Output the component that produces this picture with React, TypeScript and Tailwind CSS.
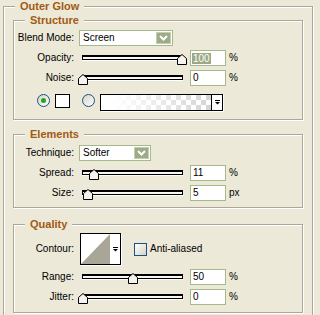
import type { ReactNode } from "react";

function Group({ title, className, children }: { title: string; className: string; children?: ReactNode }) {
  return (
    <div className={`relative border border-[#ACA899] shadow-[inset_1px_1px_0_#fff,1px_1px_0_#fff] ${className}`}>
      <span className="absolute -top-[7px] left-[11px] bg-[#ECE9D8] px-[5px] text-[11px] leading-[13px] font-bold text-[#A15A12]">
        {title}
      </span>
      {children}
    </div>
  );
}

function ChevronButton() {
  return (
    <div className="w-[15px] h-[12px] bg-[#9DAB87] border border-[#C4CEB3] flex items-center justify-center">
      <svg width="9" height="6" viewBox="0 0 9 6">
        <polyline points="1,1 4.5,4.5 8,1" fill="none" stroke="#fff" strokeWidth="2" />
      </svg>
    </div>
  );
}

function Dropdown({ value, width }: { value: string; width: string }) {
  return (
    <div className={`${width} h-[16px] bg-white border border-[#A5B98C] flex items-center justify-between pl-[3px] pr-[1px]`}>
      <span>{value}</span>
      <ChevronButton />
    </div>
  );
}

function Slider({ pos }: { pos: number }) {
  return (
    <div className="relative w-[109px] h-[16px] pt-[5px] px-[4px]">
      <div className="h-[5px] border border-black border-t-2 bg-[#F7F6F1] shadow-[0_1px_0_#fff]" />
      <svg
        className="absolute top-[4px]"
        style={{ left: Math.round(pos * 99) }}
        width="10"
        height="11"
        viewBox="0 0 10 11"
      >
        <polygon points="0.5,4.5 5,0.5 9.5,4.5 9.5,10.5 0.5,10.5" fill="#F4F3EE" stroke="#000" />
      </svg>
    </div>
  );
}

function NumberField({ value, unit, selected }: { value: string; unit: string; selected?: boolean }) {
  return (
    <div className="flex items-center ml-[3px]">
      <div className="w-[36px] h-[16px] bg-white border border-[#A5B98C] flex items-center pl-[1px]">
        <span className={selected ? "px-[1px] bg-[#9CA986] text-white leading-[11px]" : "px-[1px]"}>{value}</span>
      </div>
      <span className="ml-[3px]">{unit}</span>
    </div>
  );
}

function Label({ children }: { children: ReactNode }) {
  return <span className="w-[60px] text-right shrink-0">{children}</span>;
}

function SliderRow({ label, pos, value, unit, selected }: { label: string; pos: number; value: string; unit: string; selected?: boolean }) {
  return (
    <div className="flex items-center h-[16px]">
      <Label>{label}</Label>
      <div className="ml-[4px]">
        <Slider pos={pos} />
      </div>
      <NumberField value={value} unit={unit} selected={selected} />
    </div>
  );
}

function Radio({ checked }: { checked?: boolean }) {
  return (
    <div className="w-[13px] h-[13px] rounded-full border border-[#1C5180] bg-linear-to-br from-[#D6D3C8] to-white flex items-center justify-center">
      {checked && <div className="w-[5px] h-[5px] rounded-full bg-[#22A722]" />}
    </div>
  );
}

function MiniArrow() {
  return (
    <svg width="5" height="5" viewBox="0 0 5 5">
      <rect x="0" y="0" width="5" height="1" fill="#000" />
      <polygon points="0,2 5,2 2.5,4.5" fill="#000" />
    </svg>
  );
}

export default function App() {
  return (
    <div className="w-[320px] h-[315px] overflow-hidden bg-[#ECE9D8] pt-[6px] pl-[3px] text-[10px] leading-[12px] text-black font-['Liberation_Sans',Arial,sans-serif]">
      <Group title="Outer Glow" className="w-[310px] h-[330px] pt-[13px] px-[9px]">
        {/* Structure */}
        <Group title="Structure" className="h-[100px] pt-[9px]">
          <div className="flex flex-col gap-[4px]">
            <div className="flex items-center h-[16px]">
              <Label>Blend Mode:</Label>
              <div className="ml-[5px]">
                <Dropdown value="Screen" width="w-[94px]" />
              </div>
            </div>
            <SliderRow label="Opacity:" pos={1} value="100" unit="%" selected />
            <SliderRow label="Noise:" pos={0} value="0" unit="%" />
          </div>
          <div className="flex items-start mt-[8px] pl-[23px]">
            <Radio checked />
            <div className="ml-[5px] w-[15px] h-[14px] bg-white border border-black" />
            <div className="ml-[12px]">
              <Radio />
            </div>
            <div className="ml-[5px] w-[123px] h-[17px] border border-black flex shadow-[1px_1px_0_#fff]">
              <div className="flex-1 bg-[repeating-conic-gradient(#D4D4D4_0%_25%,#ffffff_0%_50%)] bg-[length:10px_10px]">
                <div className="h-full bg-linear-to-r from-white from-10% to-white/0" />
              </div>
              <div className="w-[11px] border-l border-black bg-white flex items-center justify-center">
                <MiniArrow />
              </div>
            </div>
          </div>
        </Group>

        {/* Elements */}
        <Group title="Elements" className="mt-[14px] h-[74px] pt-[10px]">
          <div className="flex flex-col gap-[4px]">
            <div className="flex items-center h-[16px]">
              <Label>Technique:</Label>
              <div className="ml-[5px]">
                <Dropdown value="Softer" width="w-[72px]" />
              </div>
            </div>
            <SliderRow label="Spread:" pos={0.11} value="11" unit="%" />
            <SliderRow label="Size:" pos={0.05} value="5" unit="px" />
          </div>
        </Group>

        {/* Quality */}
        <Group title="Quality" className="mt-[16px] h-[89px] pt-[8px]">
          <div className="flex items-center h-[32px]">
            <Label>Contour:</Label>
            <div className="ml-[6px] w-[41px] h-[32px] border border-black bg-white flex shadow-[1px_1px_0_#fff]">
              <svg width="29" height="30" viewBox="0 0 29 30">
                <polygon points="0,30 29,0 29,30" fill="#A9A697" />
              </svg>
              <div className="flex-1 flex items-center justify-center">
                <MiniArrow />
              </div>
            </div>
            <div className="ml-[13px] w-[13px] h-[13px] border border-[#1C5180] bg-linear-to-br from-white to-[#D4D2C6]" />
            <span className="ml-[3px]">Anti-aliased</span>
          </div>
          <div className="flex flex-col gap-[4px] mt-[4px]">
            <SliderRow label="Range:" pos={0.5} value="50" unit="%" />
            <SliderRow label="Jitter:" pos={0} value="0" unit="%" />
          </div>
        </Group>
      </Group>
    </div>
  );
}
